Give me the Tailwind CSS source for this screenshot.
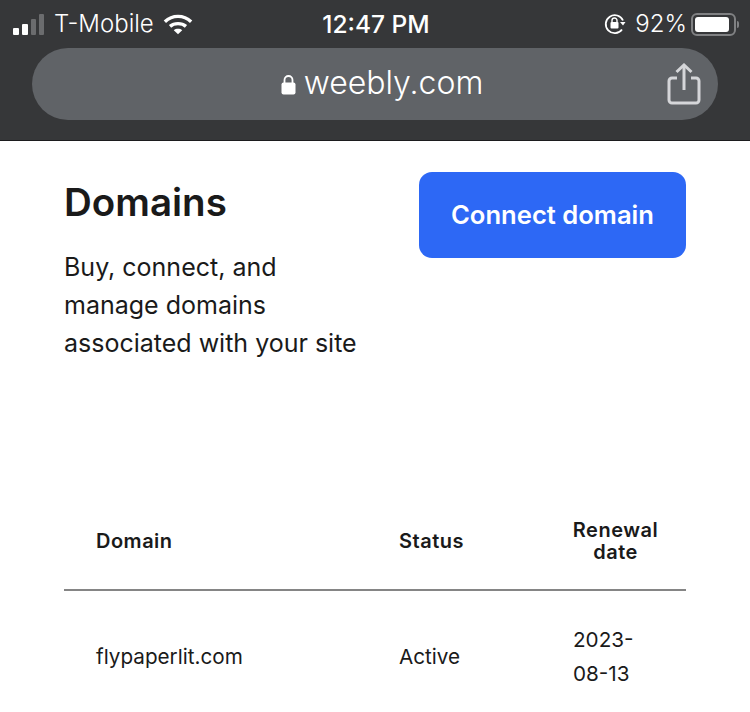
<!DOCTYPE html>
<html lang="en">
<head>
  <title>Domains</title>
  <meta charset="UTF-8" />
  <meta name="viewport" content="width=device-width, initial-scale=1" />
  <script src="https://cdn.jsdelivr.net/npm/@tailwindcss/browser@4"></script>
</head>
<body class="w-[750px] h-[712px] overflow-hidden bg-white font-['Inter',sans-serif] text-[#1a1a1a]">

  <!-- Browser chrome -->
  <header class="h-[141px] bg-[#363739] border-b border-[#1c1c1e] flex flex-col text-white">
    <div class="h-[48px] flex items-center justify-between pl-[13px] pr-[11px]">
      <div class="w-[260px] flex items-center">
        <div class="flex items-end gap-[3px] h-[21px]">
          <span class="w-[6px] h-[7px] rounded-[1px] bg-white"></span>
          <span class="w-[6px] h-[11px] rounded-[1px] bg-white"></span>
          <span class="w-[5px] h-[16px] rounded-[1px] bg-[#6b6c6e]"></span>
          <span class="w-[5px] h-[21px] rounded-[1px] bg-[#6b6c6e]"></span>
        </div>
        <span class="ml-[10px] text-[24px] font-light leading-none">T-Mobile</span>
        <svg class="ml-[9px]" width="30" height="23" viewBox="0 0 32 24" fill="none" stroke="white" stroke-width="3.6">
          <path d="M2 9 C10 1.500 22 1.500 30 9" />
          <path d="M7.500 14 C12 10 20 10 24.500 14" />
          <path d="M16 22.500 L11.500 18 C14 16 18 16 20.500 18 Z" fill="white" stroke="none" />
        </svg>
      </div>
      <span class="text-[24.500px] font-medium leading-none">12:47 PM</span>
      <div class="w-[260px] flex items-center justify-end">
        <svg width="22" height="22" viewBox="0 0 22 22" fill="none">
          <path d="M18 16.500 A9 9 0 1 1 19 7.500" stroke="white" stroke-width="1.800" />
          <path d="M16 9 L21.500 9 L19 12.500 Z" fill="white" />
          <path d="M8 9 V7.500 A2.500 2.500 0 0 1 13 7.500 V9" stroke="white" stroke-width="1.400" />
          <rect x="6.500" y="9" width="8" height="6.500" rx="1" fill="white" />
        </svg>
        <span class="ml-[9px] text-[24px] font-light leading-none">92%</span>
        <div class="ml-[4px] w-[45px] h-[23px] rounded-[6px] border-2 border-[#808183] p-[2px]">
          <div class="w-[34px] h-full rounded-[3px] bg-white"></div>
        </div>
        <span class="ml-[1px] w-[2px] h-[7px] rounded-r-sm bg-[#808183]"></span>
      </div>
    </div>
    <div class="mx-[32px] h-[72px] rounded-full bg-[#606367] flex items-center relative justify-center">
      <div class="flex items-center ml-[14px]">
        <svg width="15" height="21" viewBox="0 0 15 21" fill="none">
          <path d="M3.500 10 V6 A4 4 0 0 1 11.500 6 V10" stroke="white" stroke-width="1.800" />
          <rect x="0.500" y="8.500" width="14" height="12" rx="2" fill="white" />
        </svg>
        <span class="ml-[8px] text-[32px] font-light leading-none mt-[-3px]">weebly.com</span>
      </div>
      <svg class="absolute right-[17px] top-[15px]" width="34" height="42" viewBox="0 0 34 42" fill="none" stroke="#d5d6d9" stroke-width="3">
        <path d="M17 27 V3" />
        <path d="M9.500 9 L17 2 L24.500 9" />
        <path d="M10 15 H5 A3 3 0 0 0 2 18 V37 A3 3 0 0 0 5 40 H29 A3 3 0 0 0 32 37 V18 A3 3 0 0 0 29 15 H24" />
      </svg>
    </div>
  </header>

  <!-- Page -->
  <main class="px-[64px]">
    <section class="flex justify-between items-start">
      <div class="pt-[36px]">
        <h1 class="text-[38.500px] font-semibold leading-[50px]">Domains</h1>
        <p class="mt-[21px] text-[25px] leading-[38px]">Buy, connect, and<br />manage domains<br />associated with your site</p>
      </div>
      <button class="mt-[31px] w-[267px] h-[86px] rounded-[13px] bg-[#2d68f5] text-white text-[25.600px] font-semibold">Connect domain</button>
    </section>

    <table class="mt-[131px] w-[622px] table-fixed text-[20.700px]">
      <thead>
        <tr class="h-[97px] border-b-2 border-[#858585]">
          <th class="w-[303px] pl-[32px] text-left text-[20px] tracking-[0.5px] font-semibold">Domain</th>
          <th class="w-[174px] pl-[32px] text-left text-[20px] tracking-[0.5px] font-semibold">Status</th>
          <th class="pl-[4px] text-[20px] tracking-[0.5px] font-semibold leading-[22px]">Renewal<br />date</th>
        </tr>
      </thead>
      <tbody>
        <tr class="h-[132px]">
          <td class="pl-[32px]">flypaperlit.com</td>
          <td class="pl-[32px]">Active</td>
          <td class="pl-[32px] leading-[34px]">2023-<br />08-13</td>
        </tr>
      </tbody>
    </table>
  </main>
</body>
</html>
